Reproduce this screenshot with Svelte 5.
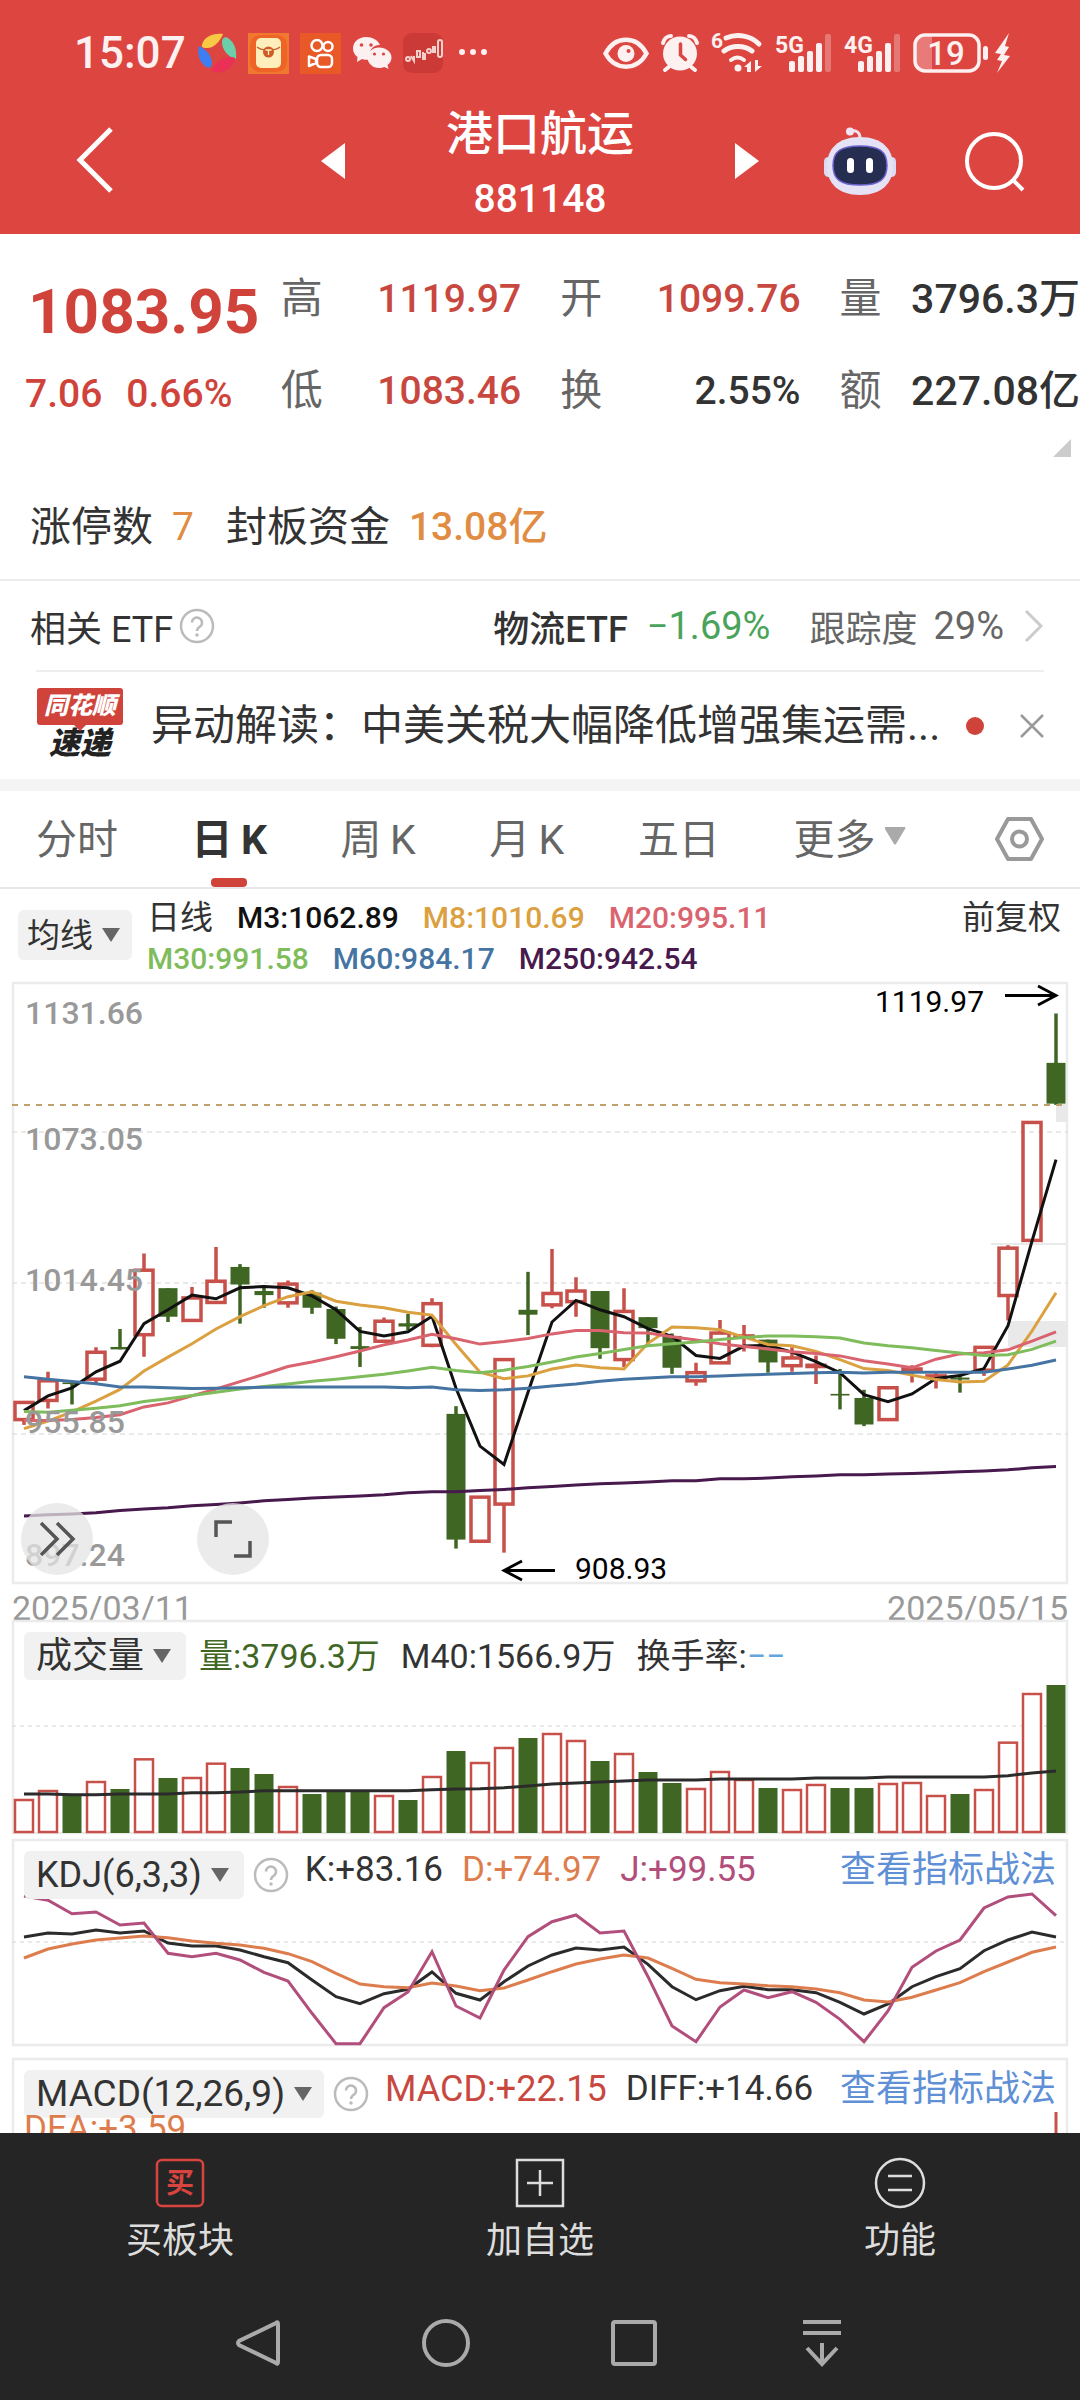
<script lang="ts">
  type Candle = [up: 0 | 1, high: number, top: number, bottom: number, low: number];

  const RED = '#c8504a';
  const GREEN = '#406624';

  const stats = [
    { label: '高', value: '1119.97', tone: 'up' },
    { label: '开', value: '1099.76', tone: 'up' },
    { label: '量', value: '3796.3万', tone: 'wide' },
    { label: '低', value: '1083.46', tone: 'up' },
    { label: '换', value: '2.55%', tone: '' },
    { label: '额', value: '227.08亿', tone: 'wide' }
  ];

  const tabs = ['分时', '日\u2009K', '周\u2009K', '月\u2009K', '五日'];
  let activeTab = $state(tabs[1]);

  const candles: Candle[] = [
    [1, 1035, 1035, 1077, 1090], [1, 960, 982, 1030, 1050], [0, 985, 986, 990, 1040], [1, 900, 912, 978, 990],
    [0, 855, 899, 905, 905], [1, 670, 711, 869, 923], [0, 755, 755, 825, 838], [1, 752, 779, 834, 834],
    [1, 654, 738, 790, 790], [0, 696, 703, 746, 842], [0, 748, 762, 772, 803], [1, 736, 745, 791, 803],
    [0, 760, 766, 803, 818], [0, 800, 806, 879, 892], [0, 850, 897, 904, 948], [1, 827, 836, 885, 885],
    [0, 818, 841, 849, 858], [1, 780, 793, 895, 900], [0, 1044, 1063, 1371, 1393], [1, 1267, 1267, 1375, 1375],
    [1, 930, 930, 1284, 1403], [0, 715, 808, 820, 870], [1, 659, 768, 796, 804], [1, 728, 762, 788, 825],
    [0, 762, 762, 902, 928], [1, 755, 812, 930, 948], [0, 826, 826, 853, 890], [0, 866, 872, 950, 965],
    [1, 938, 962, 982, 994], [1, 833, 865, 938, 938], [1, 845, 872, 875, 910], [0, 881, 881, 937, 962],
    [1, 900, 926, 945, 960], [1, 920, 944, 947, 990], [0, 953, 1014, 1018, 1052], [0, 1004, 1024, 1089, 1093],
    [1, 999, 999, 1077, 1077], [1, 944, 953, 957, 986], [1, 962, 970, 974, 1001], [0, 965, 974, 979, 1011],
    [1, 900, 900, 956, 970], [1, 650, 657, 773, 834], [1, 349, 349, 638, 638], [0, 82, 203, 303, 306]
  ];

  const averages = [
    { color: '#47194c', values: [1313, 1310, 1308, 1305, 1300, 1296, 1293, 1288, 1285, 1281, 1276, 1273, 1269, 1267, 1264, 1261, 1256, 1254, 1254, 1251, 1248, 1244, 1241, 1237, 1234, 1232, 1230, 1227, 1227, 1222, 1222, 1220, 1217, 1215, 1212, 1212, 1210, 1209, 1207, 1205, 1203, 1200, 1195, 1192] },
    { color: '#111111', values: [1055, 1019, 999, 960, 934, 842, 808, 772, 781, 754, 751, 754, 774, 808, 861, 872, 862, 824, 1000, 1142, 1187, 1010, 838, 785, 808, 825, 854, 873, 920, 927, 897, 895, 912, 935, 962, 1016, 1033, 1014, 976, 969, 952, 847, 640, 440] },
    { color: '#dba040', values: [1099, 1081, 1058, 1032, 1003, 958, 924, 891, 855, 825, 798, 776, 764, 787, 796, 803, 814, 821, 893, 961, 977, 970, 953, 943, 950, 953, 890, 850, 852, 857, 875, 893, 896, 910, 930, 952, 957, 968, 979, 985, 983, 943, 860, 766] },
    { color: '#d9646f', values: [1079, 1079, 1077, 1072, 1065, 1046, 1036, 1019, 1002, 984, 966, 947, 936, 923, 909, 894, 882, 868, 879, 892, 886, 878, 867, 859, 859, 864, 865, 874, 882, 891, 898, 904, 911, 915, 921, 933, 941, 950, 929, 916, 913, 906, 885, 862] },
    { color: '#7fbc5c', values: [1057, 1059, 1054, 1049, 1043, 1033, 1026, 1018, 1010, 1002, 996, 990, 983, 978, 972, 966, 958, 949, 957, 962, 956, 947, 936, 924, 915, 905, 896, 891, 887, 881, 876, 872, 872, 874, 877, 889, 896, 901, 908, 914, 920, 918, 905, 885] },
    { color: '#4574a3', values: [972, 978, 984, 989, 997, 997, 999, 1001, 1000, 999, 998, 997, 997, 997, 997, 997, 999, 997, 1004, 1006, 1004, 1000, 995, 990, 983, 978, 975, 972, 972, 970, 968, 966, 964, 962, 961, 963, 961, 961, 961, 961, 961, 953, 944, 931] }
  ];

  const axis = [
    { text: '1131.66', y: 42 },
    { text: '1073.05', y: 168 },
    { text: '1014.45', y: 309 },
    { text: '955.85', y: 451 },
    { text: '897.24', y: 584 }
  ];

  const volumes = [660, 633, 645, 606, 627, 538, 594, 594, 551, 564, 582, 621, 642, 636, 636, 648, 660, 591, 513, 549, 504, 474, 462, 483, 543, 522, 576, 609, 627, 576, 600, 624, 630, 615, 624, 624, 612, 609, 648, 642, 630, 488, 342, 315];
  const volumeAverage = [642, 642, 644, 644, 642, 642, 642, 638, 638, 636, 632, 632, 632, 632, 632, 632, 632, 629, 627, 626, 623, 618, 612, 609, 606, 603, 600, 600, 600, 597, 597, 597, 597, 594, 594, 594, 591, 591, 591, 591, 591, 587, 579, 573];

  const kdj = [
    { color: '#2b2b2b', values: [321, 309, 312, 300, 309, 303, 339, 348, 348, 360, 380, 398, 450, 500, 521, 491, 478, 426, 490, 510, 455, 408, 375, 354, 360, 351, 403, 470, 509, 482, 469, 479, 479, 488, 517, 552, 522, 470, 440, 416, 362, 330, 306, 321] },
    { color: '#dd7d4e', values: [384, 357, 342, 330, 324, 318, 323, 333, 340, 345, 355, 371, 395, 430, 462, 470, 473, 459, 468, 482, 474, 450, 425, 402, 387, 375, 384, 415, 448, 458, 462, 467, 470, 477, 488, 510, 516, 502, 480, 458, 425, 396, 367, 351] },
    { color: '#b24e7b', values: [198, 211, 251, 246, 285, 279, 370, 380, 370, 390, 427, 453, 550, 641, 641, 533, 486, 365, 528, 564, 420, 320, 275, 255, 309, 303, 440, 588, 635, 531, 480, 503, 485, 517, 568, 635, 543, 412, 363, 330, 234, 201, 192, 257] }
  ];

  const x = (i: number) => 12 + 24 * i;
  const priceY = (v: number) => v / 2.45 - 2;
  const volumeY = (v: number) => v / 3 - 40;
  const kdjY = (v: number) => v / 3 - 9;

  function line(values: number[], y: (v: number) => number) {
    return values.map((v, i) => `${x(i)},${y(v).toFixed(1)}`).join(' ');
  }
</script>

{#snippet caret()}
  <svg class="caret" width="18" height="14" viewBox="0 0 18 14"><path d="M0 0h18L9 14z" fill="#666" /></svg>
{/snippet}

{#snippet help()}
  <svg class="help" width="36" height="36" viewBox="0 0 36 36" fill="none" stroke="#bbb" stroke-width="2.5">
    <circle cx="18" cy="18" r="16" />
    <path d="M13 14.500a5 5 0 1 1 8 4c-2 1.300-3 2.200-3 4.500" />
    <circle cx="18" cy="27" r="1" fill="#bbb" stroke-width="1.500" />
  </svg>
{/snippet}

{#snippet signal(name: string)}
  <svg width="57" height="40" viewBox="0 0 57 40" fill="#fdf0f0">
    <text x="0" y="20" font-size="23" font-weight="700" fill="#fdf0f0">{name}</text>
    <rect x="14" y="28" width="6" height="11" rx="2" />
    <rect x="23" y="23" width="6" height="16" rx="2" />
    <rect x="32" y="18" width="6" height="21" rx="2" />
    <rect x="41" y="10" width="6" height="29" rx="2" />
    <rect x="50" y="1" width="6" height="38" rx="2" opacity="0.3" />
  </svg>
{/snippet}

<div class="app">
  <header>
    <div class="status">
      <div class="status-group left">
        <span class="time">15:07</span>
        <svg width="40" height="40" viewBox="0 0 40 40">
          <path d="M5 12C7 4 15 0 26 1c-3 8-10 15-17 14-3 0-5-1-4-3z" fill="#f8c944" />
          <path d="M25 9c0-4 3-6 6-4 6 4 9 11 8 21-8-2-14-9-14-17z" fill="#6bd0a9" />
          <path d="M38 27c-4 10-14 15-24 11 4-8 12-15 20-14 3 0 5 1 4 3z" fill="#ea3057" />
          <path d="M2 13c7 3 13 10 13 17 0 5-4 6-7 3-6-5-8-12-6-20z" fill="#3d7ff2" />
        </svg>
        <svg width="41" height="41" viewBox="0 0 41 41">
          <rect width="41" height="41" fill="#f0792f" />
          <rect x="2" y="2" width="37" height="37" rx="10" fill="#ee6426" />
          <rect x="8" y="5" width="25" height="30" rx="5" fill="#fdeebb" />
          <path d="M9 14c5 4 18 4 23 0" fill="none" stroke="#d0602a" stroke-width="1.500" />
          <circle cx="20.500" cy="19" r="5.500" fill="#cf5a26" />
          <path d="M17.500 17h6M20.500 17v5" stroke="#fdeebb" stroke-width="1.300" />
        </svg>
        <svg width="41" height="41" viewBox="0 0 41 41" fill="none" stroke="#fff" stroke-width="2.500">
          <rect width="41" height="41" fill="#e95827" stroke="none" />
          <circle cx="17" cy="12.500" r="5.500" />
          <circle cx="28" cy="13.500" r="4.500" />
          <rect x="17" y="22" width="15" height="12" rx="4" />
          <path d="M9 23.500v9.500l7-3v-4z" stroke-linejoin="round" />
        </svg>
        <svg width="40" height="40" viewBox="0 0 40 40" fill="#fdf0f0">
          <path d="M14 4C6.500 4 1 9 1 15.500c0 4 2 6.500 4.500 8.500L5 29l5-3c3 1 6 1 8 .500-3-9 4-15 10-14.500C26 7 20.500 4 14 4z" />
          <path d="M27 14.500c-6.500 0-11.500 4.500-11.500 10S20.500 35 27 35c2 0 4-.5 5.500-1l4 2-1-4c2.500-2 4-4.500 4-7.500 0-5.500-5.500-10-12.500-10z" />
          <g fill="#dc4540"><circle cx="9.500" cy="12" r="1.800" /><circle cx="19" cy="12" r="1.800" /><circle cx="22.500" cy="21" r="1.600" /><circle cx="31.500" cy="21" r="1.600" /></g>
        </svg>
        <svg width="40" height="40" viewBox="0 0 40 40" fill="none" stroke="#f3d0cc" stroke-width="2">
          <rect width="40" height="40" rx="9" fill="#cb3a36" stroke="none" />
          <circle cx="5" cy="26" r="2" /><path d="M8 23l3 5v-5" /><rect x="14" y="18" width="3" height="6" />
          <path d="M20 19v7h2v-6" /><circle cx="26" cy="18" r="2" /><rect x="30" y="14" width="2" height="5" /><rect x="35" y="7" width="4" height="17" rx="2" />
        </svg>
        <svg width="40" height="40" viewBox="0 0 40 40" fill="#fdf0f0">
          <circle cx="8" cy="19" r="3" /><circle cx="19" cy="19" r="3" /><circle cx="30" cy="19" r="3" />
        </svg>
      </div>
      <div class="status-group">
        <svg width="46" height="40" viewBox="0 0 46 40">
          <path d="M2.500 20.500C12 2 34 2 43.500 20.500 34 38 12 38 2.500 20.500z" fill="none" stroke="#fdf0f0" stroke-width="4.500" />
          <circle cx="23" cy="20.500" r="8.500" fill="#fdf0f0" />
          <circle cx="25.500" cy="18" r="2" fill="#dc4540" />
        </svg>
        <svg width="38" height="40" viewBox="0 0 38 40">
          <circle cx="19" cy="20.500" r="17" fill="#fdf0f0" />
          <path d="M2 10c1-4 4-7 8-7M36 10c-1-4-4-7-8-7M9 33l-5 4M29 33l5 4" stroke="#fdf0f0" stroke-width="4" stroke-linecap="round" fill="none" />
          <path d="M19.500 11v11l5 4.500" stroke="#dc4540" stroke-width="3.500" fill="none" stroke-linecap="round" />
        </svg>
        <svg width="52" height="40" viewBox="0 0 52 40" fill="none" stroke="#fdf0f0" stroke-width="5" stroke-linecap="round">
          <text x="0" y="15" font-size="21" font-weight="700" fill="#fdf0f0" stroke="none">6</text>
          <path d="M15 5c12-5 25-2 33 6M13 18c8-6 20-6 28 0" />
          <path d="M20 27c4-3 9-3 13 0" stroke-width="4" />
          <circle cx="27" cy="35" r="3.500" fill="#fdf0f0" stroke="none" />
          <path d="M33 34l7-6v11h-4v-5zM51 33l-7 6V27h3v6z" fill="#fdf0f0" stroke="none" />
        </svg>
        {@render signal('5G')}
        {@render signal('4G')}
        <svg width="98" height="40" viewBox="0 0 98 40">
          <path d="M12 2h7v36h-7a9 9 0 0 1-9-9V11a9 9 0 0 1 9-9z" fill="#e87b77" />
          <rect x="2" y="2" width="64" height="36" rx="10" fill="none" stroke="#fdf0f0" stroke-width="3.500" />
          <text x="33" y="32" text-anchor="middle" font-size="33" font-weight="500" fill="#fdf0f0">19</text>
          <rect x="70" y="13" width="5" height="14" rx="2.500" fill="#fdf0f0" />
          <path d="M96 0L82 20l6 1-4 6 5 1-5 12 13-17-6-1 5-8-4-1z" fill="#fdf0f0" />
        </svg>
      </div>
    </div>

    <div class="titlebar">
      <button class="plain back" aria-label="返回">
        <svg width="38" height="68" viewBox="0 0 38 68" fill="none" stroke="#fff" stroke-width="5"><path d="M35 3L4 34l31 31" /></svg>
      </button>
      <div class="switcher">
        <button class="plain" aria-label="上一个"><svg width="24" height="36" viewBox="0 0 24 36"><path d="M24 0v36L0 18z" fill="#fff" /></svg></button>
        <div class="title">
          <h1>港口航运</h1>
          <span>881148</span>
        </div>
        <button class="plain" aria-label="下一个"><svg width="24" height="36" viewBox="0 0 24 36"><path d="M0 0v36l24-18z" fill="#fff" /></svg></button>
      </div>
      <div class="tools">
        <button class="plain" aria-label="智能助手">
          <svg width="72" height="68" viewBox="0 0 72 68">
            <path d="M27 4c5-1 9 1 9 7" fill="none" stroke="#f3dfea" stroke-width="3" />
            <circle cx="26" cy="4.500" r="4" fill="#f1e4f3" />
            <rect x="0" y="30" width="9" height="20" rx="4.500" fill="#dcdaf2" />
            <rect x="63" y="30" width="9" height="20" rx="4.500" fill="#dcdaf2" />
            <path d="M36 10c22 0 33 12 33 29S58 68 36 68 3 56 3 39s11-29 33-29z" fill="#e6e2f5" />
            <path d="M36 19c20 0 27 6 27 19.500S56 58 36 58 9 52 9 38.500 16 19 36 19z" fill="#252e50" stroke="#6d63cf" stroke-width="1.500" />
            <rect x="23" y="31" width="7" height="15" rx="3.500" fill="#fff" />
            <rect x="42" y="31" width="7" height="15" rx="3.500" fill="#fff" />
          </svg>
        </button>
        <button class="plain" aria-label="搜索">
          <svg width="60" height="62" viewBox="0 0 60 62" fill="none" stroke="#fff" stroke-width="4"><circle cx="29" cy="31" r="27" /><path d="M47 49l11 11" /></svg>
        </button>
      </div>
    </div>
  </header>

  <section class="quote">
    <div class="quote-top">
      <div class="price-block">
        <strong class="price">1083.95</strong>
        <div class="change"><span>7.06</span><span>0.66%</span></div>
      </div>
      <dl class="stats">
        {#each stats as s}
          <div class="stat">
            <dt>{s.label}</dt>
            <dd class={s.tone}>{s.value}</dd>
          </div>
        {/each}
      </dl>
    </div>
    <svg class="corner" width="18" height="18" viewBox="0 0 18 18"><path d="M18 0v18H0z" fill="#ccc" /></svg>
    <div class="limits">
      <span>涨停数</span><b class="seven">7</b>
      <span>封板资金</span><b>13.08亿</b>
    </div>
  </section>

  <div class="etf">
    <span class="etf-label">相关 ETF</span>
    {@render help()}
    <a class="etf-link" href="#etf">
      <b>物流ETF</b>
      <span class="down">−1.69%</span>
      <span class="track">跟踪度</span>
      <span class="track rate">29%</span>
      <svg width="20" height="32" viewBox="0 0 20 32" fill="none" stroke="#ccc" stroke-width="3"><path d="M2 1l15 15L2 31" /></svg>
    </a>
  </div>

  <div class="news">
    <div class="brand">
      <span class="brand-top">同花顺</span>
      <span class="brand-bottom">速递</span>
    </div>
    <a class="headline" href="#news">异动解读：中美关税大幅降低增强集运需...</a>
    <span class="dot"></span>
    <button class="plain" aria-label="关闭">
      <svg width="24" height="24" viewBox="0 0 24 24" stroke="#999" stroke-width="2.500"><path d="M1 1l22 22M23 1L1 23" /></svg>
    </button>
  </div>

  <nav class="tabs">
    {#each tabs as tab}
      <button class="plain tab" class:active={tab === activeTab} onclick={() => (activeTab = tab)}>{tab}</button>
    {/each}
    <button class="plain tab more">更多<svg width="22" height="18" viewBox="0 0 22 18"><path d="M1 0h20q1 1 0 2L12 17q-1 1-2 0L1 2z" fill="#aaa" /></svg></button>
    <button class="plain" aria-label="设置">
      <svg width="49" height="46" viewBox="0 0 49 46" fill="none" stroke="#999" stroke-width="4" stroke-linejoin="round"><path d="M13 3h23l11 20-11 20H13L2 23z" /><circle cx="24.500" cy="23" r="7.500" /></svg>
    </button>
  </nav>

  <main>
    <div class="legend">
      <button class="pill small">均线{@render caret()}</button>
      <div class="legend-items">
        <span class="period">日线</span>
        <span class="m3">M3:1062.89</span>
        <span class="m8">M8:1010.69</span>
        <span class="m20">M20:995.11</span>
        <span class="m30">M30:991.58</span>
        <span class="m60">M60:984.17</span>
        <span class="m250">M250:942.54</span>
      </div>
      <button class="plain adjust">前复权</button>
    </div>

    <div class="chart">
      <svg viewBox="0 0 1056 602">
        <rect x="1" y="1" width="1054" height="600" fill="none" stroke="#ebebeb" stroke-width="2.500" />
        {#each [150, 301, 452] as gy}
          <path d="M0 {gy}H1056" stroke="#e2e2e2" stroke-width="1.500" stroke-dasharray="5 4" />
        {/each}
        <path d="M979 262H1056" stroke="#eaeaea" stroke-width="2" />
        <rect x="996" y="339" width="60" height="26" fill="#e9e9e9" />
        <rect x="1044" y="122" width="12" height="18" fill="#e9e9e9" />

        {#each candles as [up, high, top, bottom, low], i}
          {#if up}
            <path d="M{x(i)} {priceY(high)}V{priceY(top)}M{x(i)} {priceY(bottom)}V{priceY(low)}" stroke={RED} stroke-width="3.500" />
            <rect x={x(i) - 9} y={priceY(top)} width="18" height={priceY(bottom) - priceY(top)} fill="none" stroke={RED} stroke-width="3.500" />
          {:else}
            <path d="M{x(i)} {priceY(high)}V{priceY(low)}" stroke={GREEN} stroke-width="3.500" />
            <rect x={x(i) - 9.5} y={priceY(top)} width="19" height={priceY(bottom) - priceY(top)} fill={GREEN} />
          {/if}
        {/each}
        {#each averages as a}
          <polyline points={line(a.values, priceY)} fill="none" stroke={a.color} stroke-width="3" />
        {/each}
        <path d="M0 123H1056" stroke="#bfa26b" stroke-width="2" stroke-dasharray="6 6" />

        {#each axis as a}
          <text class="axis" x="13" y={a.y}>{a.text}</text>
        {/each}

        <text class="mark" x="972" y="30" text-anchor="end">1119.97</text>
        <path d="M993 13.500h50M1026 4l18 9.500-18 9.500" fill="none" stroke="#000" stroke-width="2.800" />
        <text class="mark" x="563" y="597">908.93</text>
        <path d="M543 588.500h-50M510 579l-18 9.500 18 9.500" fill="none" stroke="#000" stroke-width="2.800" />
      </svg>
      <div class="chart-tools">
        <button class="round" aria-label="展开">
          <svg width="36" height="36" viewBox="0 0 36 36" fill="none" stroke="#555" stroke-width="3.500"><path d="M2 2l16 16L2 34M18 2l16 16-16 16" /></svg>
        </button>
        <button class="round" aria-label="全屏">
          <svg width="38" height="38" viewBox="0 0 38 38" fill="none" stroke="#555" stroke-width="3.500"><path d="M2 17V2h16M36 21v15H20" /></svg>
        </button>
      </div>
    </div>

    <div class="dates"><span>2025/03/11</span><span>2025/05/15</span></div>

    <section class="panel">
      <svg viewBox="0 0 1056 214">
        <rect x="1" y="1" width="1054" height="212" fill="none" stroke="#ebebeb" stroke-width="2.500" />
        <path d="M0 106H1056" stroke="#e2e2e2" stroke-width="1.500" stroke-dasharray="4 4" />
        {#each volumes as v, i}
          {#if candles[i][0]}
            <rect x={x(i) - 9} y={volumeY(v)} width="18" height={212 - volumeY(v)} fill="#fff" stroke={RED} stroke-width="2.500" />
          {:else}
            <rect x={x(i) - 9.5} y={volumeY(v)} width="19" height={213 - volumeY(v)} fill={GREEN} />
          {/if}
        {/each}
        <polyline points={line(volumeAverage, volumeY)} fill="none" stroke="#2b2b2b" stroke-width="3" />
      </svg>
      <div class="panel-head level">
        <button class="pill">成交量{@render caret()}</button>
        <span class="green">量:3796.3万</span>
        <span>M40:1566.9万</span>
        <span>换手率:<i>−−</i></span>
      </div>
    </section>

    <section class="panel kdj">
      <svg viewBox="0 0 1056 207">
        <rect x="1" y="1" width="1054" height="205" fill="none" stroke="#ebebeb" stroke-width="2.500" />
        <path d="M0 103H1056" stroke="#e2e2e2" stroke-width="1.500" stroke-dasharray="4 4" />
        {#each kdj as k}
          <polyline points={line(k.values, kdjY)} fill="none" stroke={k.color} stroke-width="3" />
        {/each}
      </svg>
      <div class="panel-head">
        <button class="pill">KDJ(6,3,3){@render caret()}</button>
        {@render help()}
        <span>K:+83.16</span>
        <span class="orange">D:+74.97</span>
        <span class="purple">J:+99.55</span>
        <a href="#kdj">查看指标战法</a>
      </div>
    </section>

    <section class="panel macd">
      <svg viewBox="0 0 1056 207">
        <rect x="1" y="1" width="1054" height="205" fill="none" stroke="#ebebeb" stroke-width="2.500" />
        <path d="M1044 54V160" stroke={RED} stroke-width="3" />
      </svg>
      <div class="panel-head">
        <button class="pill">MACD(12,26,9){@render caret()}</button>
        {@render help()}
        <span class="red">MACD:+22.15</span>
        <span>DIFF:+14.66</span>
        <a href="#macd">查看指标战法</a>
        <span class="orange dea">DEA:+3.59</span>
      </div>
    </section>
  </main>

  <footer>
    <div class="actions">
      <button class="plain action">
        <svg width="52" height="52" viewBox="0 0 52 52">
          <rect x="3" y="3" width="46" height="46" rx="5" fill="none" stroke="#d8443f" stroke-width="2.500" />
          <text x="26" y="36" text-anchor="middle" font-size="28" font-weight="700" fill="#d8443f">买</text>
        </svg>
        买板块
      </button>
      <button class="plain action">
        <svg width="52" height="52" viewBox="0 0 52 52" fill="none" stroke="#ddd" stroke-width="2.500"><path d="M3 3h46v46H3zM26 13v26M13 26h26" /></svg>
        加自选
      </button>
      <button class="plain action">
        <svg width="52" height="52" viewBox="0 0 52 52" fill="none" stroke="#ddd" stroke-width="2.500"><circle cx="26" cy="26" r="24" /><path d="M14 19h24M14 33h24" /></svg>
        功能
      </button>
    </div>
    <div class="system" role="group" aria-label="系统导航">
      <svg width="48" height="48" viewBox="0 0 48 48"><path d="M42 4q2-2 2 1v38q0 3-2 1L5 26q-2-2 0-4z" /></svg>
      <svg width="48" height="48" viewBox="0 0 48 48"><circle cx="24" cy="24" r="22" /></svg>
      <svg width="48" height="48" viewBox="0 0 48 48"><rect x="3" y="3" width="42" height="42" rx="2" /></svg>
      <svg width="48" height="48" viewBox="0 0 48 48"><path d="M5 3h38M5 14h38M24 24v21M9 29l15 16 15-16" /></svg>
    </div>
  </footer>
</div>

<style>
  :global(body) {
    margin: 0;
    background: #fff;
  }
  .app {
    height: 100vh;
    display: flex;
    flex-direction: column;
    overflow: hidden;
    color: #333;
    font-family: Roboto, 'Noto Sans CJK SC', sans-serif;
    white-space: nowrap;
  }
  svg {
    display: block;
    flex: none;
    overflow: visible;
  }
  button {
    font: inherit;
    color: inherit;
    border: 0;
    padding: 0;
  }
  .plain {
    background: none;
  }
  a {
    color: inherit;
    text-decoration: none;
  }

  header {
    flex: none;
    background: #dc4540;
    color: #fff;
  }
  .status {
    height: 98px;
    display: flex;
    align-items: center;
    justify-content: space-between;
    padding: 4px 69px 0 74px;
  }
  .status-group {
    display: flex;
    align-items: center;
    gap: 12px;
  }
  .status-group.left {
    gap: 11px;
  }
  .time {
    font-size: 44px;
    font-weight: 500;
    color: #fdf0f0;
  }
  .titlebar {
    display: grid;
    grid-template-columns: 1fr 438px 1fr;
    align-items: center;
    height: 132px;
  }
  .back {
    justify-self: start;
    margin: 0 0 16px 76px;
  }
  .switcher {
    display: flex;
    align-items: center;
    justify-content: space-between;
  }
  .switcher .plain,
  .tools {
    margin-bottom: 14px;
  }
  .title {
    text-align: center;
    font-size: 39px;
    font-weight: 500;
    line-height: 68px;
  }
  .title h1 {
    margin: 0;
    font-size: 47px;
    font-weight: 500;
    line-height: 62px;
  }
  .tools {
    display: flex;
    align-items: center;
    justify-content: flex-end;
    gap: 69px;
    padding-right: 55px;
  }

  .quote {
    flex: none;
    padding-bottom: 23px;
    border-bottom: 2px solid #ededed;
    font-size: 39px;
    line-height: 60px;
  }
  .quote-top {
    display: flex;
    height: 186px;
  }
  .price-block {
    flex: 0 0 26%;
    padding-top: 38px;
    color: #d0433b;
    font-weight: 500;
  }
  .price {
    display: block;
    padding-left: 28px;
    margin-bottom: 12px;
    font-size: 62px;
    line-height: 80px;
    font-weight: 700;
  }
  .change {
    display: flex;
    gap: 24px;
    padding-left: 25px;
  }
  .stats {
    flex: 1;
    display: grid;
    grid-template-columns: repeat(3, 1fr);
    align-content: start;
    gap: 32px 39px;
    margin: 0;
    padding-top: 35px;
  }
  .stat {
    display: flex;
    justify-content: space-between;
    height: 60px;
  }
  .stat dt {
    font-size: 42px;
    color: #666;
  }
  .stat dd {
    margin: 0;
    font-weight: 500;
  }
  .stat .up {
    color: #c8483f;
  }
  .stat .wide {
    font-size: 41px;
  }
  .corner {
    margin: 19px 9px 0 auto;
  }
  .limits {
    display: flex;
    align-items: center;
    height: 60px;
    margin-top: 40px;
    margin-bottom: -1px;
    padding-left: 30px;
    font-size: 41px;
  }
  .limits b {
    margin-left: 19px;
    font-size: 39px;
    font-weight: 500;
    color: #e08c42;
  }
  .limits .seven {
    margin-right: 32px;
    font-weight: 400;
  }

  .etf {
    flex: none;
    display: flex;
    align-items: center;
    height: 89px;
    margin: 0 36px;
    border-bottom: 2px solid #eee;
    font-size: 36px;
  }
  .etf-label {
    margin: 0 6px 0 -6px;
  }
  .etf-link {
    flex: 1;
    display: flex;
    align-items: center;
    justify-content: flex-end;
  }
  .etf-link b {
    font-weight: 500;
  }
  .down {
    margin: 0 39px 0 19px;
    font-size: 38px;
    color: #4aa35a;
  }
  .track {
    color: #666;
  }
  .rate {
    margin: 0 20px 0 16px;
    font-size: 38px;
  }

  .news {
    flex: none;
    display: flex;
    align-items: center;
    height: 107px;
    padding: 0 36px;
    border-bottom: 12px solid #f4f4f4;
  }
  .brand {
    flex: none;
    width: 88px;
    display: flex;
    flex-direction: column;
    align-items: center;
    font-weight: 900;
    font-style: italic;
    color: #222;
  }
  .brand-top {
    position: relative;
    width: 86px;
    border-radius: 3px;
    background: #d0433b;
    color: #fff;
    font-size: 24px;
    line-height: 37px;
    text-align: center;
  }
  .brand-top::after {
    content: '';
    position: absolute;
    left: 50%;
    top: 100%;
    margin-left: -6px;
    border: 6px solid transparent;
    border-top-color: #d0433b;
  }
  .brand-bottom {
    font-size: 31px;
    line-height: 38px;
  }
  .headline {
    flex: 1;
    min-width: 0;
    margin-left: 27px;
    font-size: 42px;
    line-height: 60px;
  }
  .dot {
    flex: none;
    width: 18px;
    height: 18px;
    margin-right: 36px;
    border-radius: 50%;
    background: #d0433b;
  }

  .tabs {
    flex: none;
    display: flex;
    align-items: center;
    justify-content: space-between;
    height: 96px;
    padding: 0 36px;
    border-bottom: 2px solid #e8e8e8;
    color: #666;
    font-size: 41px;
  }
  .tab {
    height: 96px;
    padding-bottom: 6px;
    position: relative;
  }
  .tab.active {
    color: #333;
    font-weight: 700;
  }
  .tab.active::after {
    content: '';
    position: absolute;
    left: 50%;
    bottom: 0;
    width: 36px;
    height: 9px;
    margin-left: -18px;
    border-radius: 4px;
    background: #d0433b;
  }
  .more {
    display: flex;
    align-items: center;
    gap: 9px;
    margin-right: 15px;
  }

  main {
    flex: 1;
    min-height: 0;
    overflow: hidden;
    padding: 0 12px;
  }
  .pill {
    flex: none;
    display: flex;
    align-items: center;
    gap: 9px;
    height: 48px;
    padding: 0 15px 0 12px;
    border-radius: 6px;
    background: #f1f1f1;
    color: #333;
    font-size: 36px;
  }
  .pill.small {
    height: 50px;
    margin: 21px 15px 0 6px;
    padding: 0 12px 0 9px;
    font-size: 33px;
  }
  .legend {
    display: flex;
    align-items: flex-start;
    height: 93px;
    font-size: 33px;
    line-height: 41px;
  }
  .legend-items {
    flex: 0 1 650px;
    display: flex;
    flex-wrap: wrap;
    column-gap: 24px;
    padding-top: 8px;
    font-size: 30px;
    font-weight: 500;
  }
  .period {
    font-size: 33px;
    font-weight: 400;
  }
  .adjust {
    margin: 8px 7px 0 auto;
  }
  .m3 { color: #111; }
  .m8 { color: #dba040; }
  .m20 { color: #d9646f; }
  .m30 { color: #7fbc5c; }
  .m60 { color: #4574a3; }
  .m250 { color: #47194c; }

  .chart,
  .panel {
    display: grid;
  }
  .chart > *,
  .panel > * {
    grid-area: 1 / 1;
    min-width: 0;
  }
  .chart > svg,
  .panel > svg {
    width: 100%;
    height: auto;
  }
  .axis {
    font-size: 32px;
    font-weight: 500;
    fill: #999;
  }
  .mark {
    font-size: 30px;
    fill: #000;
  }
  .chart-tools {
    align-self: end;
    display: flex;
    gap: 104px;
    padding: 0 0 9px 9px;
  }
  .round {
    display: grid;
    place-items: center;
    width: 72px;
    height: 72px;
    border-radius: 50%;
    background: rgba(228, 228, 228, 0.75);
  }
  .dates {
    display: flex;
    justify-content: space-between;
    height: 36px;
    color: #999;
    font-size: 34px;
    line-height: 48px;
  }

  .kdj {
    margin-top: 5px;
  }
  .macd {
    margin-top: 12px;
  }
  .panel-head {
    display: flex;
    flex-wrap: wrap;
    align-content: flex-start;
    align-items: flex-start;
    padding: 7px 12px 0;
    font-size: 35px;
    line-height: 48px;
    gap: 0 19px;
  }
  .panel-head .pill {
    margin-top: 5px;
  }
  .panel-head :global(.help) {
    margin: 11px -3px 0 -10px;
  }
  .macd .pill {
    padding-right: 12px;
    font-size: 37px;
  }
  .macd .red {
    font-size: 36px;
  }
  .panel-head.level {
    padding-top: 12px;
    font-size: 34px;
    column-gap: 21px;
  }
  .level .pill {
    margin: 0 -8px 0 0;
  }
  .panel-head a {
    margin-left: auto;
    font-size: 36px;
    color: #5f90d6;
  }
  .panel-head i {
    font-style: normal;
    color: #64a6dc;
  }
  .dea {
    width: 100%;
    margin-top: -13px;
  }
  .green { color: #406624; }
  .orange { color: #dd7d4e; }
  .purple { color: #b24e7b; }
  .red { color: #c8483f; }

  footer {
    flex: none;
    background: #252525;
    color: #ddd;
  }
  .actions {
    display: grid;
    grid-template-columns: repeat(3, 1fr);
    height: 153px;
  }
  .action {
    display: flex;
    flex-direction: column;
    align-items: center;
    padding-top: 24px;
    font-size: 36px;
    line-height: 64px;
  }
  .system {
    display: flex;
    justify-content: center;
    gap: 140px;
    height: 81px;
    padding-top: 33px;
    fill: none;
    stroke: #aaa;
    stroke-width: 4;
  }
</style>
